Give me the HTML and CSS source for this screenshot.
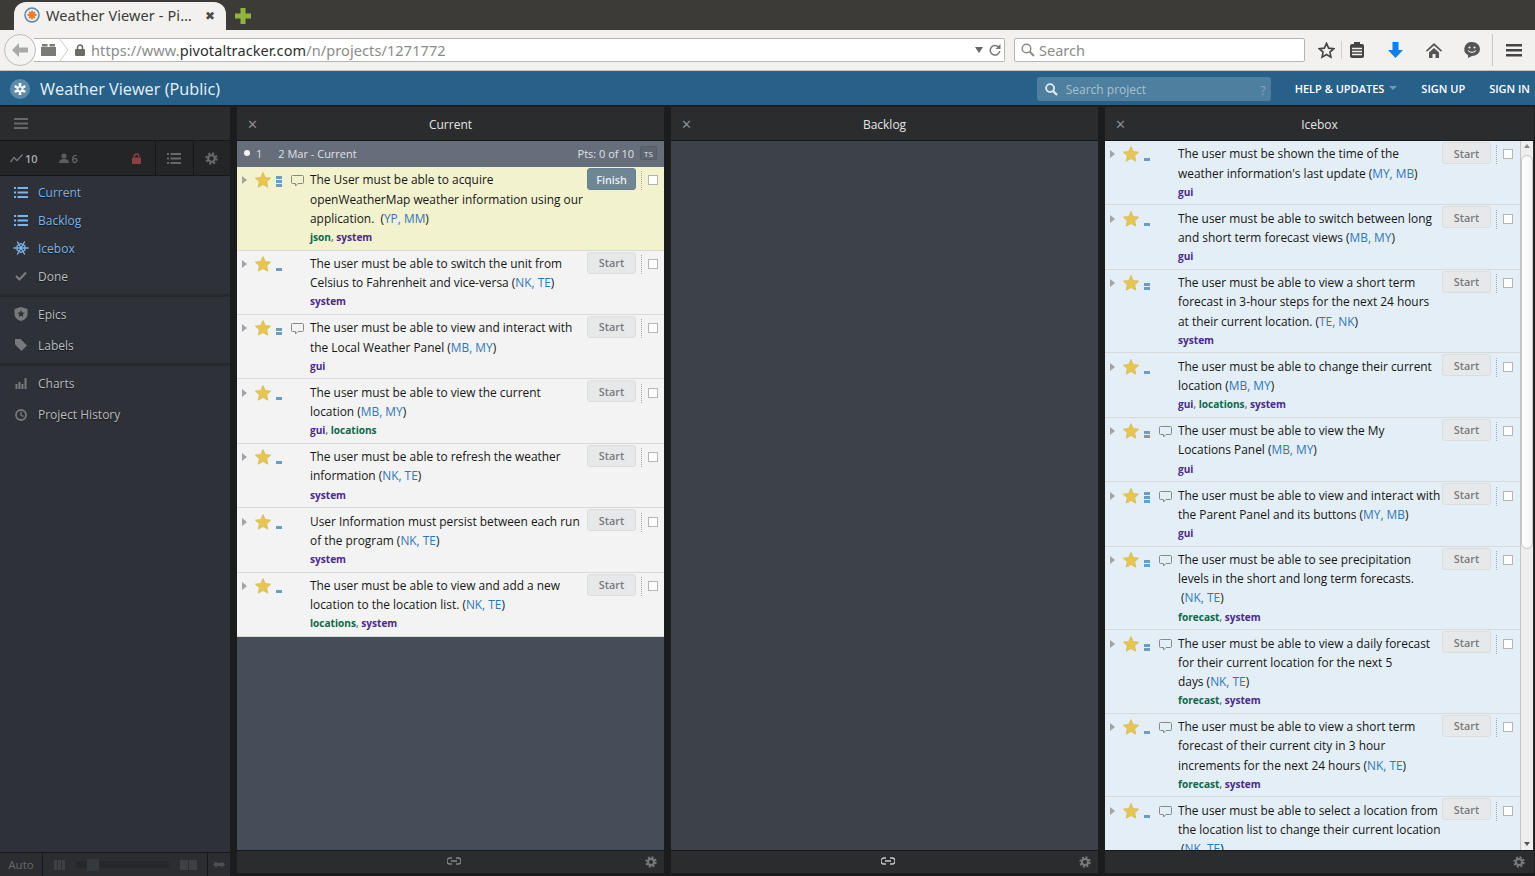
FILE: index.html
```html
<!DOCTYPE html>
<html lang="en">
<head>
    <meta charset="UTF-8">
    <title>Weather Viewer (Public) - Pivotal Tracker</title>
    <link rel="stylesheet" href="styles.css">
</head>
<body>
    <svg class="defs" width="0" height="0">
        <symbol id="star" viewBox="0 0 16 16"><path d="M8 .5l2.3 5 5.4.6-4 3.7 1.1 5.4L8 12.5l-4.8 2.7 1.1-5.4-4-3.7 5.4-.6z"/></symbol>
        <symbol id="est1" viewBox="0 0 6 11"><rect y="8" width="6" height="3"/></symbol>
        <symbol id="est2" viewBox="0 0 6 11"><rect y="4" width="6" height="3"/><rect y="8" width="6" height="3"/></symbol>
        <symbol id="est3" viewBox="0 0 6 11"><rect y="0" width="6" height="3"/><rect y="4" width="6" height="3"/><rect y="8" width="6" height="3"/></symbol>
        <symbol id="comment" viewBox="0 0 13 12"><path d="M1.5.5h10a1 1 0 0 1 1 1v6a1 1 0 0 1-1 1H7L4.5 11V8.500h-3a1 1 0 0 1-1-1v-6a1 1 0 0 1 1-1z" fill="none" stroke="#8a8a85"/></symbol>
        <symbol id="gear" viewBox="0 0 12 12"><circle cx="6" cy="6" r="4.600" fill="none" stroke="currentColor" stroke-width="2.200" stroke-dasharray="2 1.610"/><circle cx="6" cy="6" r="3" fill="none" stroke="currentColor" stroke-width="2"/></symbol>
        <symbol id="list" viewBox="0 0 14 11"><path d="M0 0h2v2H0zM3.500 0H14v2H3.500zM0 4.500h2v2H0zM3.500 4.500H14v2H3.500zM0 9h2v2H0zM3.500 9H14v2H3.500z"/></symbol>
        <symbol id="burger" viewBox="0 0 14 11"><path d="M0 0h14v2H0zM0 4.500h14v2H0zM0 9h14v2H0z"/></symbol>
        <symbol id="link" viewBox="0 0 14 8"><path d="M5 1H3a3 3 0 0 0 0 6h2M9 1h2a3 3 0 0 1 0 6H9M4 4h6" fill="none" stroke="currentColor" stroke-width="1.300"/></symbol>
    </svg>

    <div class="tabbar">
        <div class="tab">
            <svg class="fav" width="16" height="16" viewBox="0 0 16 16"><circle cx="8" cy="8" r="7" fill="#e8eef2" stroke="#5b87a5" stroke-width="1.500"/><path d="M8 3.500v9M3.500 8h9M5 5l6 6M11 5l-6 6" stroke="#ef7b2a" stroke-width="1.800"/></svg>
            <span class="tab-title">Weather Viewer - Pi…</span>
            <span class="tab-close">✖</span>
        </div>
        <svg class="newtab" width="16" height="16" viewBox="0 0 16 16"><path d="M5.500 0h5v5.500H16v5h-5.500V16h-5v-5.500H0v-5h5.500z" fill="#8fb63c"/></svg>
    </div>

    <div class="toolbar">
        <div class="backbtn">
            <svg width="16" height="14" viewBox="0 0 16 14"><path d="M7 0L0 7l7 7V9.500h9v-5H7z" fill="#a9a9a6"/></svg>
        </div>
        <div class="urlbar">
            <svg class="tabs-ic" width="15" height="12" viewBox="0 0 15 12"><path d="M0 3h15v9H0zM1 0h5.500v2.500H1zM8.500 0H14v2.500H8.500z" fill="#7a7a76"/></svg>
            <svg class="identity" width="24" height="24" viewBox="0 0 24 24"><path d="M1 0l9 12-9 12" fill="none" stroke="#c9c9c6"/></svg>
            <svg class="lock" width="10" height="12" viewBox="0 0 10 12"><path d="M2.500 5V3.500a2.500 2.500 0 0 1 5 0V5" fill="none" stroke="#6b6b68" stroke-width="1.500"/><rect y="5" width="10" height="7" rx="1" fill="#6b6b68"/></svg>
            <span class="url"><span class="url-dim">https://www.</span>pivotaltracker.com<span class="url-dim">/n/projects/1271772</span></span>
            <span class="url-drop"></span>
            <svg class="reload" width="12" height="12" viewBox="0 0 12 12"><path d="M10 3.500A4.800 4.800 0 1 0 10.800 7" fill="none" stroke="#77777a" stroke-width="1.500"/><path d="M11.500 0v5h-5z" fill="#77777a"/></svg>
        </div>
        <div class="searchbar">
            <svg width="14" height="14" viewBox="0 0 14 14"><circle cx="5.500" cy="5.500" r="4.300" fill="none" stroke="#8a8a86" stroke-width="1.500"/><path d="M8.500 8.500L13 13" stroke="#8a8a86" stroke-width="2"/></svg>
            <span>Search</span>
        </div>
        <div class="tool-icons">
            <svg class="t-star" width="17" height="17" viewBox="0 0 16 16"><path d="M8 1.300l2 4.500 4.800.5-3.600 3.200 1 4.800L8 11.800l-4.200 2.500 1-4.800L1.200 6.300 6 5.800z" fill="none" stroke="#444" stroke-width="1.500"/></svg>
            <span class="t-sep"></span>
            <svg class="t-clip" width="14" height="16" viewBox="0 0 14 16"><rect y="2" width="14" height="14" rx="2" fill="#444"/><rect x="4" width="6" height="4" fill="#444"/><path d="M2 6.500h10M2 9.500h10M2 12.500h10" stroke="#f2f1f0" stroke-width="1.300"/></svg>
            <svg class="t-down" width="15" height="16" viewBox="0 0 15 16"><path d="M4.500 0h6v8H15l-7.500 8L0 8h4.500z" fill="#0f7ff0"/></svg>
            <svg class="t-home" width="16" height="15" viewBox="0 0 16 15"><path d="M8 0L0 7.500l1 1.200L8 2.500l7 6.200 1-1.200zM3 9.500L8 5l5 4.500V15H9.500v-4h-3v4H3z" fill="#555"/></svg>
            <svg class="t-smile" width="16" height="16" viewBox="0 0 16 16"><path d="M8 0a8 7 0 0 1 0 14l-4 2v-3A7.500 7 0 0 1 8 0z" fill="#555"/><circle cx="5.500" cy="5.500" r="1.100" fill="#f2f1f0"/><circle cx="10.500" cy="5.500" r="1.100" fill="#f2f1f0"/><path d="M4 8.500c2 2.500 6 2.500 8 0" fill="none" stroke="#f2f1f0" stroke-width="1.200"/></svg>
            <span class="t-sep tall"></span>
            <svg class="t-menu" width="16" height="13" viewBox="0 0 16 13"><path d="M0 0h16v2.500H0zM0 5h16v2.500H0zM0 10h16v2.500H0z" fill="#444"/></svg>
        </div>
    </div>

    <header class="app-header">
        <svg class="logo" width="20" height="20" viewBox="0 0 20 20"><circle cx="10" cy="10" r="10" fill="#5d8cab"/><path d="M10 4v4.500M10 11.500V16M4.800 7l3.900 2.300M11.300 10.700l3.900 2.300M15.200 7l-3.900 2.300M8.700 10.700L4.800 13" stroke="#fff" stroke-width="2.600"/></svg>
        <span class="project-name">Weather Viewer (Public)</span>
        <div class="project-search">
            <svg width="13" height="13" viewBox="0 0 14 14"><circle cx="5.500" cy="5.500" r="4.300" fill="none" stroke="#dfe8ee" stroke-width="2"/><path d="M8.500 8.500L13 13" stroke="#dfe8ee" stroke-width="2.400"/></svg>
            <span class="ps-text">Search project</span>
            <span class="ps-help">?</span>
        </div>
        <nav class="header-nav">
            <a>HELP &amp; UPDATES<i class="caret"></i></a>
            <a>SIGN UP</a>
            <a>SIGN IN</a>
        </nav>
    </header>

    <div class="main">
        <aside class="sidebar">
            <div class="side-top">
                <svg width="14" height="11" class="ic-dim"><use href="#burger"/></svg>
            </div>
            <div class="side-stats">
                <div class="stat-group">
                    <svg class="trend" width="13" height="9" viewBox="0 0 13 9"><path d="M.5 8L4 3.500l3 3L12.500.5" fill="none" stroke="#777" stroke-width="1.300"/></svg>
                    <span class="stat-v">10</span>
                    <svg class="person" width="10" height="10" viewBox="0 0 10 10"><circle cx="5" cy="3" r="2.600" fill="#5a5c60"/><path d="M0 10c0-3 2-4 5-4s5 1 5 4z" fill="#5a5c60"/></svg>
                    <span class="stat-m">6</span>
                    <svg class="padlock" width="9" height="11" viewBox="0 0 10 12"><path d="M2.500 5V3.500a2.500 2.500 0 0 1 5 0V5" fill="none" stroke="#8c3f44" stroke-width="1.700"/><rect y="5" width="10" height="7" rx="1" fill="#8c3f44"/></svg>
                </div>
                <div class="stat-btn"><svg width="14" height="11" class="ic-dim"><use href="#list"/></svg></div>
                <div class="stat-btn"><svg width="13" height="13" class="ic-gear"><use href="#gear"/></svg></div>
            </div>
            <ul class="nav-list panels-nav">
                <li class="on"><svg width="14" height="11"><use href="#list"/></svg>Current</li>
                <li class="on"><svg width="14" height="11"><use href="#list"/></svg>Backlog</li>
                <li class="on"><svg width="14" height="14" viewBox="0 0 14 14"><path d="M-.5 7h15M3.250 .5l7.500 13M10.750 .5l-7.500 13" stroke="#7db4ea" stroke-width="1.400"/><path d="M7 2.500L10.900 4.750v4.500L7 11.500 3.100 9.250v-4.500z" fill="none" stroke="#7db4ea" stroke-width="1.200"/></svg>Icebox</li>
                <li><svg width="12" height="10" viewBox="0 0 12 10"><path d="M1 5l3.500 3.500L11 1.500" fill="none" stroke="#7a7c80" stroke-width="2.200"/></svg>Done</li>
            </ul>
            <ul class="nav-list tall">
                <li><svg width="13" height="14" viewBox="0 0 13 14"><path d="M6.500 0L13 2v5c0 3.500-3 6-6.500 7C3 13 0 10.500 0 7V2z" fill="#77797d"/><path d="M6.500 3l1.100 2.400 2.600.3-1.900 1.800.5 2.600-2.300-1.300-2.300 1.300.5-2.600-1.900-1.800 2.600-.3z" fill="#2e3238"/></svg>Epics</li>
                <li><svg width="12" height="12" viewBox="0 0 12 12"><path d="M0 0h5.500L12 6.500 6.500 12 0 5.500z" fill="#77797d"/></svg>Labels</li>
            </ul>
            <ul class="nav-list tall last">
                <li><svg width="11" height="11" viewBox="0 0 11 11"><path d="M0 6h2v5H0zM3 4h2v7H3zM6 6h2v5H6zM9 0h2v11H9z" fill="#77797d"/></svg>Charts</li>
                <li><svg width="12" height="12" viewBox="0 0 12 12"><circle cx="6" cy="6" r="5" fill="none" stroke="#77797d" stroke-width="1.800"/><path d="M6 3v3.300l2.500 1" fill="none" stroke="#77797d" stroke-width="1.300"/></svg>Project History</li>
            </ul>
            <div class="side-bottom">
                <div class="auto">Auto</div>
                <div class="slider">
                    <svg width="11" height="10" viewBox="0 0 11 10"><path d="M0 0h3v10H0zM4 0h3v10H4zM8 0h3v10H8z" fill="#3d4045"/></svg>
                    <div class="track"><span class="thumb"></span></div>
                    <svg width="17" height="10" viewBox="0 0 17 10"><path d="M0 0h8v10H0zM9 0h8v10H9z" fill="#3d4045"/></svg>
                </div>
                <div class="expand">
                    <svg width="12" height="7" viewBox="0 0 12 7"><path d="M3.500 0v2h5V0L12 3.500 8.500 7V5h-5v2L0 3.500z" fill="#4d5055"/></svg>
                </div>
            </div>
        </aside>

        <section class="panel">
            <div class="panel-head">
                <span class="close">✕</span>
                <span>Current</span>
            </div>
            <div class="panel-body current">
                <div class="sprint">
                    <i class="dot"></i><span class="sprint-no">1</span>
                    <span class="sprint-date">2 Mar - Current</span>
                    <span class="sprint-pts">Pts: 0 of 10</span>
                    <span class="ts">TS</span>
                </div>

                <div class="story started">
                    <span class="arrow"></span>
                    <svg class="star"><use href="#star"/></svg>
                    <svg class="est"><use href="#est3"/></svg>
                    <svg class="cmt"><use href="#comment"/></svg>
                    <div class="story-text">
                        The User must be able to acquire openWeatherMap weather information using our application. &nbsp;<span class="who">(<a>YP, MM</a>)</span>
                        <div class="labels"><b class="l-g">json</b>, <b class="l-p">system</b></div>
                    </div>
                    <button class="btn finish">Finish</button>
                    <span class="dots"></span><span class="check"></span>
                </div>
                <div class="story">
                    <span class="arrow"></span>
                    <svg class="star"><use href="#star"/></svg>
                    <svg class="est"><use href="#est1"/></svg>
                    <span class="cmt"></span>
                    <div class="story-text">
                        The user must be able to switch the unit from Celsius to Fahrenheit and vice-versa <span class="who">(<a>NK, TE</a>)</span>
                        <div class="labels"><b class="l-p">system</b></div>
                    </div>
                    <button class="btn">Start</button>
                    <span class="dots"></span><span class="check"></span>
                </div>
                <div class="story">
                    <span class="arrow"></span>
                    <svg class="star"><use href="#star"/></svg>
                    <svg class="est"><use href="#est2"/></svg>
                    <svg class="cmt"><use href="#comment"/></svg>
                    <div class="story-text">
                        The user must be able to view and interact with the Local Weather Panel <span class="who">(<a>MB, MY</a>)</span>
                        <div class="labels"><b class="l-p">gui</b></div>
                    </div>
                    <button class="btn">Start</button>
                    <span class="dots"></span><span class="check"></span>
                </div>
                <div class="story">
                    <span class="arrow"></span>
                    <svg class="star"><use href="#star"/></svg>
                    <svg class="est"><use href="#est1"/></svg>
                    <span class="cmt"></span>
                    <div class="story-text">
                        The user must be able to view the current location <span class="who">(<a>MB, MY</a>)</span>
                        <div class="labels"><b class="l-p">gui</b>, <b class="l-g">locations</b></div>
                    </div>
                    <button class="btn">Start</button>
                    <span class="dots"></span><span class="check"></span>
                </div>
                <div class="story">
                    <span class="arrow"></span>
                    <svg class="star"><use href="#star"/></svg>
                    <svg class="est"><use href="#est1"/></svg>
                    <span class="cmt"></span>
                    <div class="story-text">
                        The user must be able to refresh the weather information <span class="who">(<a>NK, TE</a>)</span>
                        <div class="labels"><b class="l-p">system</b></div>
                    </div>
                    <button class="btn">Start</button>
                    <span class="dots"></span><span class="check"></span>
                </div>
                <div class="story">
                    <span class="arrow"></span>
                    <svg class="star"><use href="#star"/></svg>
                    <svg class="est"><use href="#est1"/></svg>
                    <span class="cmt"></span>
                    <div class="story-text">
                        User Information must persist between each run of the program <span class="who">(<a>NK, TE</a>)</span>
                        <div class="labels"><b class="l-p">system</b></div>
                    </div>
                    <button class="btn">Start</button>
                    <span class="dots"></span><span class="check"></span>
                </div>
                <div class="story">
                    <span class="arrow"></span>
                    <svg class="star"><use href="#star"/></svg>
                    <svg class="est"><use href="#est1"/></svg>
                    <span class="cmt"></span>
                    <div class="story-text">
                        The user must be able to view and add a new location to the location list. <span class="who">(<a>NK, TE</a>)</span>
                        <div class="labels"><b class="l-g">locations</b>, <b class="l-p">system</b></div>
                    </div>
                    <button class="btn">Start</button>
                    <span class="dots"></span><span class="check"></span>
                </div>
            </div>
            <div class="panel-foot">
                <svg class="foot-link" width="14" height="8"><use href="#link"/></svg>
                <svg class="foot-gear" width="12" height="12"><use href="#gear"/></svg>
            </div>
        </section>

        <section class="panel">
            <div class="panel-head">
                <span class="close">✕</span>
                <span>Backlog</span>
            </div>
            <div class="panel-body backlog"></div>
            <div class="panel-foot">
                <svg class="foot-link bright" width="14" height="8"><use href="#link"/></svg>
                <svg class="foot-gear" width="12" height="12"><use href="#gear"/></svg>
            </div>
        </section>

        <section class="panel icebox-panel">
            <div class="panel-head">
                <span class="close">✕</span>
                <span>Icebox</span>
            </div>
            <div class="panel-body icebox">
                <div class="story-list">
                    <div class="story">
                        <span class="arrow"></span>
                        <svg class="star"><use href="#star"/></svg>
                        <svg class="est"><use href="#est1"/></svg>
                        <span class="cmt"></span>
                        <div class="story-text">
                            The user must be shown the time of the weather information's last update <span class="who">(<a>MY, MB</a>)</span>
                            <div class="labels"><b class="l-p">gui</b></div>
                        </div>
                        <button class="btn">Start</button>
                        <span class="dots"></span><span class="check"></span>
                    </div>
                    <div class="story">
                        <span class="arrow"></span>
                        <svg class="star"><use href="#star"/></svg>
                        <svg class="est"><use href="#est1"/></svg>
                        <span class="cmt"></span>
                        <div class="story-text">
                            The user must be able to switch between long and short term forecast views <span class="who">(<a>MB, MY</a>)</span>
                            <div class="labels"><b class="l-p">gui</b></div>
                        </div>
                        <button class="btn">Start</button>
                        <span class="dots"></span><span class="check"></span>
                    </div>
                    <div class="story">
                        <span class="arrow"></span>
                        <svg class="star"><use href="#star"/></svg>
                        <svg class="est"><use href="#est2"/></svg>
                        <span class="cmt"></span>
                        <div class="story-text">
                            The user must be able to view a short term forecast in 3-hour steps for the next 24 hours at their current location. <span class="who">(<a>TE, NK</a>)</span>
                            <div class="labels"><b class="l-p">system</b></div>
                        </div>
                        <button class="btn">Start</button>
                        <span class="dots"></span><span class="check"></span>
                    </div>
                    <div class="story">
                        <span class="arrow"></span>
                        <svg class="star"><use href="#star"/></svg>
                        <svg class="est"><use href="#est1"/></svg>
                        <span class="cmt"></span>
                        <div class="story-text">
                            The user must be able to change their current location <span class="who">(<a>MB, MY</a>)</span>
                            <div class="labels"><b class="l-p">gui</b>, <b class="l-g">locations</b>, <b class="l-p">system</b></div>
                        </div>
                        <button class="btn">Start</button>
                        <span class="dots"></span><span class="check"></span>
                    </div>
                    <div class="story">
                        <span class="arrow"></span>
                        <svg class="star"><use href="#star"/></svg>
                        <svg class="est"><use href="#est2"/></svg>
                        <svg class="cmt"><use href="#comment"/></svg>
                        <div class="story-text">
                            The user must be able to view the My<br>Locations Panel <span class="who">(<a>MB, MY</a>)</span>
                            <div class="labels"><b class="l-p">gui</b></div>
                        </div>
                        <button class="btn">Start</button>
                        <span class="dots"></span><span class="check"></span>
                    </div>
                    <div class="story">
                        <span class="arrow"></span>
                        <svg class="star"><use href="#star"/></svg>
                        <svg class="est"><use href="#est3"/></svg>
                        <svg class="cmt"><use href="#comment"/></svg>
                        <div class="story-text">
                            The user must be able to view and interact with the Parent Panel and its buttons <span class="who">(<a>MY, MB</a>)</span>
                            <div class="labels"><b class="l-p">gui</b></div>
                        </div>
                        <button class="btn">Start</button>
                        <span class="dots"></span><span class="check"></span>
                    </div>
                    <div class="story">
                        <span class="arrow"></span>
                        <svg class="star"><use href="#star"/></svg>
                        <svg class="est"><use href="#est2"/></svg>
                        <svg class="cmt"><use href="#comment"/></svg>
                        <div class="story-text">
                            The user must be able to see precipitation levels in the short and long term forecasts.<br>&nbsp;<span class="who">(<a>NK, TE</a>)</span>
                            <div class="labels"><b class="l-g">forecast</b>, <b class="l-p">system</b></div>
                        </div>
                        <button class="btn">Start</button>
                        <span class="dots"></span><span class="check"></span>
                    </div>
                    <div class="story">
                        <span class="arrow"></span>
                        <svg class="star"><use href="#star"/></svg>
                        <svg class="est"><use href="#est2"/></svg>
                        <svg class="cmt"><use href="#comment"/></svg>
                        <div class="story-text">
                            The user must be able to view a daily forecast for their current location for the next 5<br>days <span class="who">(<a>NK, TE</a>)</span>
                            <div class="labels"><b class="l-g">forecast</b>, <b class="l-p">system</b></div>
                        </div>
                        <button class="btn">Start</button>
                        <span class="dots"></span><span class="check"></span>
                    </div>
                    <div class="story">
                        <span class="arrow"></span>
                        <svg class="star"><use href="#star"/></svg>
                        <svg class="est"><use href="#est1"/></svg>
                        <svg class="cmt"><use href="#comment"/></svg>
                        <div class="story-text">
                            The user must be able to view a short term forecast of their current city in 3 hour increments for the next 24 hours <span class="who">(<a>NK, TE</a>)</span>
                            <div class="labels"><b class="l-g">forecast</b>, <b class="l-p">system</b></div>
                        </div>
                        <button class="btn">Start</button>
                        <span class="dots"></span><span class="check"></span>
                    </div>
                    <div class="story">
                        <span class="arrow"></span>
                        <svg class="star"><use href="#star"/></svg>
                        <svg class="est"><use href="#est1"/></svg>
                        <svg class="cmt"><use href="#comment"/></svg>
                        <div class="story-text">
                            The user must be able to select a location from the location list to change their current location<br>&nbsp;<span class="who">(<a>NK, TE</a>)</span>
                        </div>
                        <button class="btn">Start</button>
                        <span class="dots"></span><span class="check"></span>
                    </div>
                </div>
                <div class="scrollbar">
                    <i class="sb-up"></i>
                    <div class="sb-thumb"></div>
                    <i class="sb-down"></i>
                </div>
            </div>
            <div class="panel-foot">
                <svg class="foot-gear" width="12" height="12"><use href="#gear"/></svg>
            </div>
        </section>
    </div>
</body>
</html>
```

FILE: styles.css
```css
* {
    box-sizing: border-box;
}

html, body {
    margin: 0;
    height: 876px;
    overflow: hidden;
}

body {
    display: flex;
    flex-direction: column;
    background: #1b1c1d;
    font-family: "Open Sans", sans-serif;
    font-size: 12px;
}

.defs {
    position: absolute;
}

/* Browser chrome */
.tabbar {
    height: 30px;
    flex: none;
    display: flex;
    align-items: flex-end;
    padding-left: 14px;
    background: #3c3b37;
}

.tab {
    width: 212px;
    height: 28px;
    display: flex;
    align-items: center;
    padding: 0 11px 2px 10px;
    background: #f2f1f0;
    border-radius: 12px 12px 0 0;
    font-family: "Noto Sans", sans-serif;
    font-size: 14.5px;
    color: #3c3b37;
}

.tab-title {
    margin-left: 6px;
    flex: 1;
    white-space: nowrap;
    letter-spacing: .1px;
}

.tab-close {
    font-size: 12px;
    color: #4c4b47;
}

.newtab {
    margin: 0 0 6px 9px;
}

.toolbar {
    height: 41px;
    flex: none;
    display: flex;
    align-items: center;
    padding-left: 4px;
    background: #f2f1f0;
    border-bottom: 1px solid #c4c3c0;
    font-family: "Noto Sans", sans-serif;
}

.backbtn {
    width: 32px;
    height: 32px;
    flex: none;
    z-index: 1;
    display: flex;
    align-items: center;
    justify-content: center;
    background: #f4f4f3;
    border: 1px solid #bdbcb9;
    border-radius: 50%;
}

.urlbar {
    width: 971px;
    height: 24px;
    margin-left: -2px;
    display: flex;
    align-items: center;
    background: #fff;
    border: 1px solid #b5b4b0;
    border-left: 0;
    border-radius: 0 2px 2px 0;
    font-size: 14.5px;
    color: #2f2f2f;
}

.tabs-ic {
    margin-left: 7px;
}

.identity {
    margin-left: 2px;
}

.lock {
    margin-left: -7px;
}

.url {
    margin-left: 6px;
    flex: 1;
    letter-spacing: .1px;
}

.url-dim {
    color: #8b8b8b;
}

.url-drop {
    width: 0;
    height: 0;
    border: 4px solid transparent;
    border-top: 6px solid #66666a;
    border-bottom: 0;
    margin-right: 6px;
}

.reload {
    margin-right: 3px;
}

.searchbar {
    width: 291px;
    height: 24px;
    margin-left: 9px;
    display: flex;
    align-items: center;
    gap: 4px;
    padding-left: 6px;
    background: #fff;
    border: 1px solid #b5b4b0;
    border-radius: 2px;
    font-size: 14.5px;
    color: #8b8b8b;
}

.tool-icons {
    flex: 1;
    display: flex;
    align-items: center;
    height: 32px;
}

.t-star {
    margin-left: 13px;
}

.t-sep {
    width: 1px;
    height: 18px;
    margin-left: 6px;
    background: #d0cfcc;
}

.t-sep.tall {
    height: 32px;
    margin-left: 12px;
    background: #c8c7c4;
}

.t-clip {
    margin-left: 8px;
}

.t-down {
    margin-left: 24px;
}

.t-home {
    margin-left: 23px;
}

.t-smile {
    margin-left: 22px;
}

.t-menu {
    margin-left: 13px;
}

/* App header */
.app-header {
    height: 36px;
    flex: none;
    display: flex;
    align-items: center;
    padding: 2px 0 0 10px;
    background: #27618a;
    color: #fff;
    border-bottom: 2px solid #1d1e1f;
}

.project-name {
    margin-left: 10px;
    flex: 1;
    font-size: 16.300px;
    color: #e8f0f5;
}

.project-search {
    width: 234px;
    height: 24px;
    display: flex;
    align-items: center;
    padding: 0 5px 0 8px;
    background: #4e7f9f;
    border-radius: 3px;
    font-size: 12px;
    color: #a9c2d2;
}

.ps-text {
    margin-left: 8px;
    flex: 1;
}

.ps-help {
    color: #8aa9be;
    padding-top: 2px;
}

.header-nav {
    display: flex;
    gap: 24px;
    margin-left: 24px;
    padding: 0 5px 2px 0;
    font-size: 11px;
    font-weight: 600;
}

.caret {
    display: inline-block;
    width: 0;
    height: 0;
    margin-left: 5px;
    vertical-align: 3px;
    border: 4.500px solid transparent;
    border-top: 4px solid #6f9bb8;
    border-bottom: 0;
}

/* Workspace */
.main {
    flex: 1;
    min-height: 0;
    display: flex;
    gap: 7px;
    padding-right: 1px;
}

.sidebar {
    width: 230px;
    flex: none;
    display: flex;
    flex-direction: column;
    background: #2e3238;
    color: #b9bbbe;
}

.side-top {
    height: 34px;
    flex: none;
    display: flex;
    align-items: center;
    padding-left: 14px;
    background: #2b2c2e;
    border-bottom: 1px solid #161718;
}

.ic-dim {
    fill: #66686b;
}

.ic-gear {
    color: #66686b;
}

.side-stats {
    height: 35px;
    flex: none;
    display: flex;
    background: #242527;
    border-bottom: 1px solid #161718;
}

.stat-group {
    flex: 1;
    display: flex;
    align-items: center;
    padding-left: 10px;
    font-size: 11px;
    font-weight: 600;
}

.stat-v {
    margin-left: 2px;
    color: #a8aaad;
}

.person {
    margin-left: 21px;
}

.stat-m {
    margin-left: 3px;
    color: #66686b;
}

.padlock {
    margin-left: auto;
    margin-right: 14px;
}

.stat-btn {
    width: 37.500px;
    display: flex;
    align-items: center;
    justify-content: center;
    border-left: 1px solid #161718;
}

.nav-list {
    list-style: none;
    margin: 0;
    padding: 2px 0 3.500px;
    border-bottom: 3.500px solid #26292e;
}

.nav-list li {
    height: 28px;
    display: flex;
    align-items: center;
    text-shadow: 0 1px 1px #15171a;
}

.nav-list svg {
    width: 14px;
    margin: 0 10px 0 14px;
    flex: none;
    overflow: visible;
}

.panels-nav li.on {
    color: #79b4ee;
    fill: #79b4ee;
}

.nav-list.tall {
    padding: 2px 0 2.500px;
}

.nav-list.tall li {
    height: 31px;
}

.nav-list.last {
    border-bottom: 0;
    flex: 1;
}

.side-bottom {
    height: 24px;
    flex: none;
    display: flex;
    background: #2b2d30;
    border-top: 1px solid #161718;
    font-size: 11.5px;
    color: #66686b;
}

.auto {
    width: 43px;
    display: flex;
    align-items: center;
    justify-content: center;
    border-right: 1px solid #161718;
}

.slider {
    flex: 1;
    display: flex;
    align-items: center;
    gap: 11px;
    padding: 0 10px 0 11px;
}

.track {
    flex: 1;
    height: 7px;
    display: flex;
    align-items: center;
    padding-left: 11px;
    background: #25272a;
    border-radius: 2px;
}

.thumb {
    width: 12px;
    height: 12px;
    background: #35383c;
}

.expand {
    width: 23px;
    display: flex;
    align-items: center;
    justify-content: center;
    border-left: 1px solid #161718;
}

/* Panels */
.panel {
    width: 427px;
    flex: none;
    display: flex;
    flex-direction: column;
    margin-bottom: 3px;
}

.icebox-panel {
    width: 429px;
}

.panel-head {
    height: 34px;
    flex: none;
    position: relative;
    display: flex;
    align-items: center;
    justify-content: center;
    padding-top: 2px;
    background: #2b2c2e;
    border-bottom: 1px solid #161718;
    color: #e3e4e5;
}

.close {
    position: absolute;
    left: 10px;
    top: 8px;
    font-size: 13px;
    color: #8a8b8d;
}

.panel-body {
    flex: 1;
    min-height: 0;
    overflow: hidden;
    background: #454e58;
}

.panel-body.backlog {
    background: #3c4248;
}

.panel-foot {
    height: 23px;
    flex: none;
    display: flex;
    align-items: center;
    justify-content: center;
    position: relative;
    background: #2b2c2e;
    border-top: 1px solid #161718;
}

.foot-link {
    margin: -3px 0 0 6px;
    color: #85878a;
}

.foot-link.bright {
    color: #c5c6c8;
}

.foot-gear {
    position: absolute;
    right: 7px;
    top: 5px;
    color: #77797c;
}

.icebox-panel .foot-gear {
    right: 9px;
}

.sprint {
    height: 26px;
    display: flex;
    align-items: center;
    padding: 0 7px 2px;
    background: #676e7b;
    color: #dfe1e4;
    font-size: 11px;
}

.dot {
    width: 6px;
    height: 6px;
    background: #f2f2f2;
    border-radius: 50%;
}

.sprint-no {
    margin-left: 6px;
}

.sprint-date {
    margin-left: 16px;
    flex: 1;
}

.ts {
    width: 17px;
    height: 14px;
    margin-left: 6px;
    display: flex;
    align-items: center;
    justify-content: center;
    border: 1px solid #555c68;
    border-radius: 2px;
    background: #5d6470;
    font-size: 8px;
}

/* Stories */
.story {
    display: flex;
    align-items: flex-start;
    padding: 3.400px 0 2.400px 5px;
    background: #f3f3f3;
    border-bottom: 1px solid #d9d9d9;
    color: #161616;
}

.story.started {
    background: #f3f2cf;
}

.icebox .story {
    background: #e3eef7;
}

.arrow {
    width: 0;
    height: 0;
    margin-top: 6px;
    flex: none;
    border: 4px solid transparent;
    border-left: 5px solid #a3a39f;
    border-right: 0;
}

.star {
    width: 16px;
    height: 16px;
    margin: 2px 0 0 8px;
    flex: none;
    fill: #e8c64e;
    stroke: #cdb24c;
    stroke-width: .6px;
}

.est {
    width: 6px;
    height: 11px;
    margin: 6px 0 0 5px;
    flex: none;
    fill: #6c9cc2;
}

.cmt {
    width: 13px;
    height: 12px;
    margin: 5px 0 0 9px;
    flex: none;
}

.story-text {
    width: 277px;
    margin-left: 6px;
    flex: none;
    font-size: 11.900px;
    line-height: 19.200px;
}

.icebox .story-text {
    width: 264px;
}

.who a {
    color: #2f77bb;
}

.labels {
    font-size: 10.100px;
    color: #444;
}

.l-p {
    color: #4b2a8c;
}

.l-g {
    color: #0b6a49;
}

.btn {
    width: 49px;
    height: 22px;
    margin-top: -2.400px;
    flex: none;
    padding: 0;
    background: #e7e8e9;
    border: 1px solid #dcdddd;
    border-radius: 3px;
    font-family: inherit;
    font-size: 10.800px;
    font-weight: 600;
    color: #777a7d;
}

.btn.finish {
    background: #6f8795;
    border-color: #66808e;
    color: #e9eef1;
}

.dots {
    width: 1px;
    height: 19px;
    margin: 1px 0 0 5px;
    flex: none;
    border-left: 1px dotted #a5a5a5;
}

.check {
    width: 10px;
    height: 10px;
    margin: 5px 0 0 6px;
    flex: none;
    background: #fff;
    border: 1px solid #b5b5b5;
}

.panel-body.icebox {
    display: flex;
}

.story-list {
    flex: 1;
    min-width: 0;
}

.scrollbar {
    width: 14px;
    flex: none;
    display: flex;
    flex-direction: column;
    align-items: center;
    background: #eeeeee;
    border-left: 1px solid #c4c4c4;
    border-right: 1px solid #2b2c2e;
    position: relative;
}

.sb-up, .sb-down {
    width: 0;
    height: 0;
    position: absolute;
    border: 3px solid transparent;
}

.sb-up {
    top: 3px;
    border-bottom: 4px solid #8a8a8a;
    border-top: 0;
}

.sb-down {
    bottom: 4px;
    border-top: 4px solid #555;
    border-bottom: 0;
}

.sb-thumb {
    width: 12px;
    height: 394px;
    margin-top: 14px;
    background: linear-gradient(90deg, #ffffff, #f4f4f4);
    border: 1px solid #c4c4c4;
    border-radius: 6px;
}
```
